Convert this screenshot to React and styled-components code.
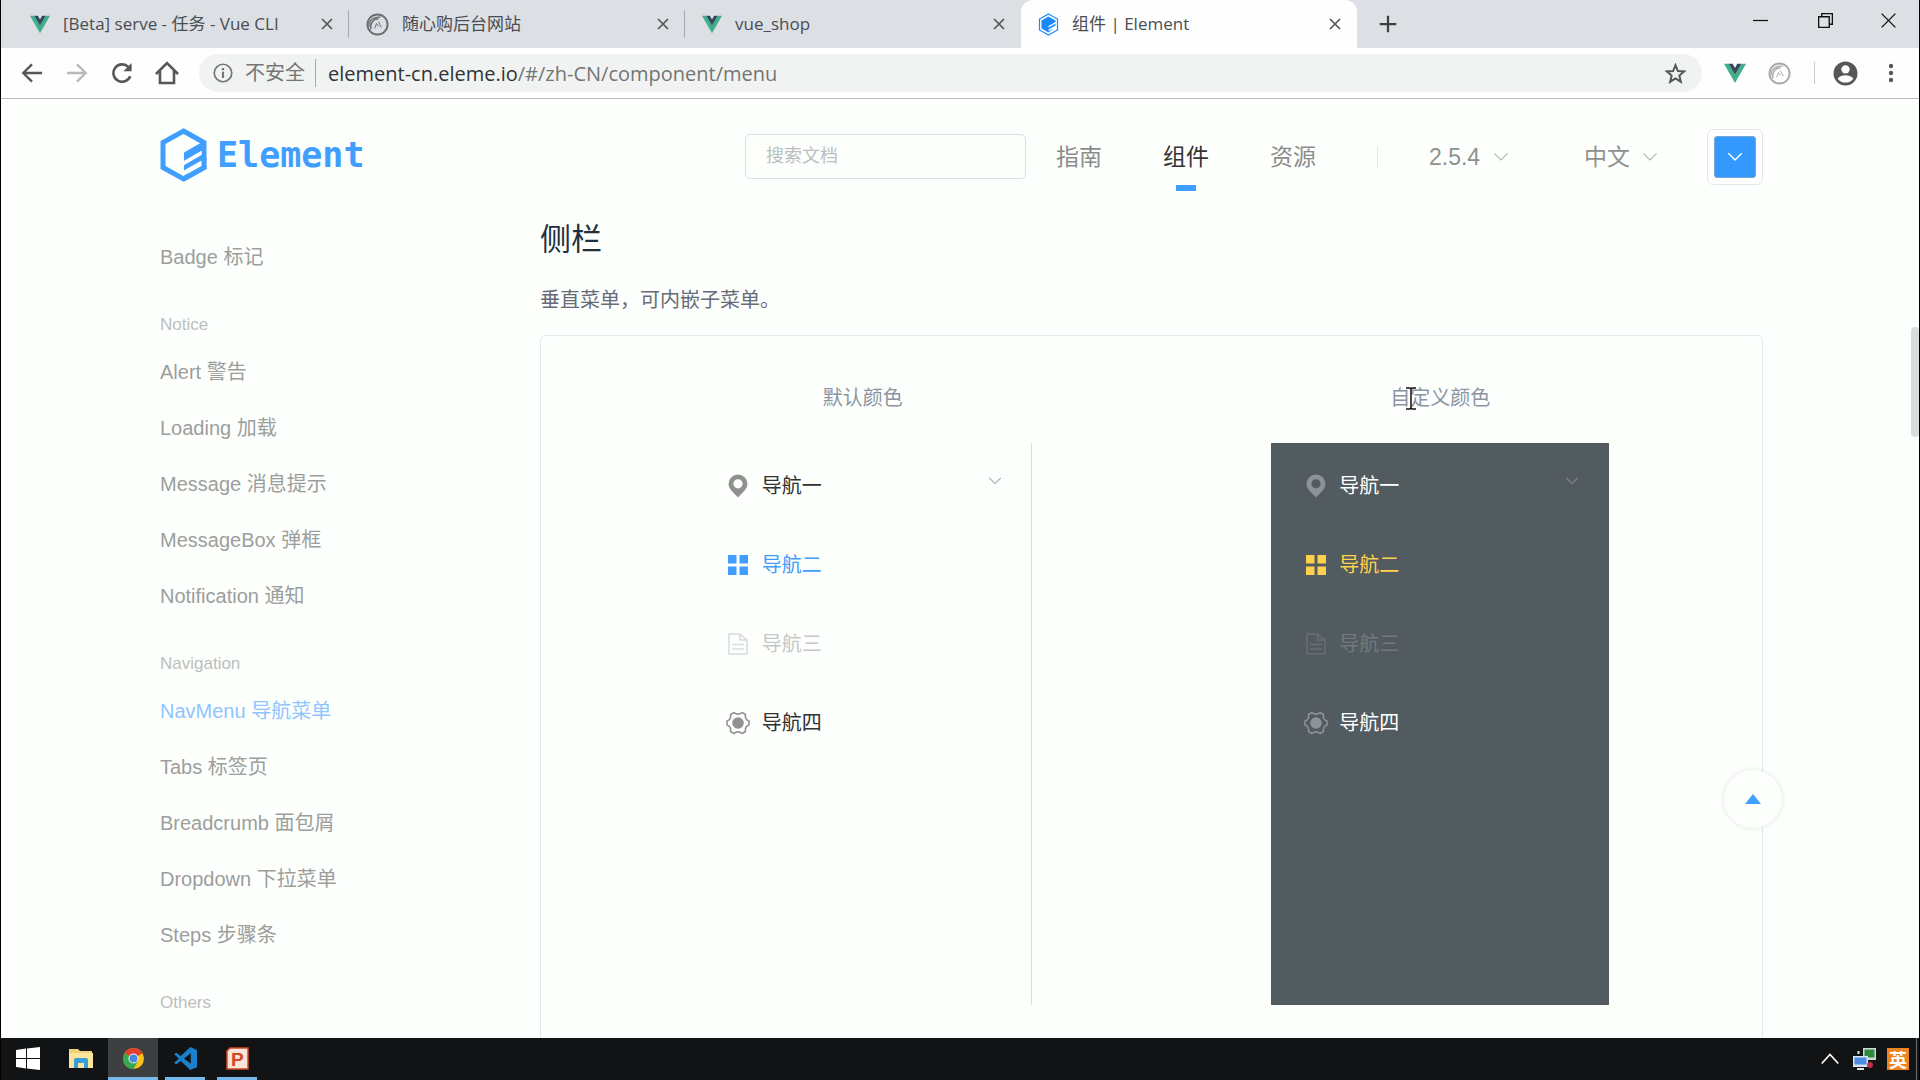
import React from "react";
import styled, { createGlobalStyle, css } from "styled-components";

const ui = `"Open Sans", "Noto Sans CJK SC", sans-serif`;
const body = `"Liberation Sans", "Noto Sans CJK SC", sans-serif`;
const blue = "#409eff";

const Global = createGlobalStyle`
  *, *::before, *::after { box-sizing: border-box; }
  body { margin: 0; background: #fdfffd; font-family: ${body}; }
  button, input, select { font: inherit; color: inherit; border: 0; padding: 0; background: none; }
  a { color: inherit; text-decoration: none; }
  ul, h3, p { margin: 0; padding: 0; list-style: none; font-weight: 400; }
  svg { display: block; flex: none; }
`;

const Screen = styled.div`
  height: 100vh;
  display: flex;
  flex-direction: column;
  border: solid #000;
  border-width: 0 1px;
  overflow: hidden;
`;

/* ---------- browser chrome ---------- */

const TabStrip = styled.header`
  flex: none;
  height: 48px;
  display: flex;
  align-items: stretch;
  padding-left: 12px;
  background: #dcdfe4;
  color: #4a4d52;
  font-family: ${ui};
  font-size: 17px;
`;

const Tab = styled.div`
  position: relative;
  width: 336px;
  display: flex;
  align-items: center;
  padding: 0 14px 0 17px;
  ${(p) =>
    p.$active
      ? css`
          background: #fdfefd;
          border-radius: 12px 12px 0 0;
        `
      : css`
          &::after {
            content: "";
            position: absolute;
            right: 0;
            top: 10px;
            height: 28px;
            width: 1px;
            background: ${p.$divider ? "#a3a6ab" : "transparent"};
          }
        `}
`;

const TabTitle = styled.button`
  flex: 1;
  display: flex;
  align-items: center;
  gap: 13px;
  height: 34px;
  line-height: 34px;
  text-align: left;
  white-space: nowrap;
`;

const IconButton = styled.button`
  display: grid;
  place-items: center;
  width: ${(p) => p.$w || 45}px;
  height: ${(p) => p.$h || 36}px;
  flex: none;
  color: ${(p) => p.$color || "#55585a"};
`;

const NewTab = styled(IconButton)`
  width: 62px;
  height: 48px;
  color: #3c4043;
`;

const WindowControls = styled.div`
  margin-left: auto;
  display: flex;
  padding-bottom: 8px;
`;

const Toolbar = styled.div`
  flex: none;
  height: 51px;
  display: flex;
  align-items: center;
  padding: 0 6px 0 8px;
  background: #fdfefd;
  border-bottom: 1px solid #b9bbba;
  font-family: ${ui};
  font-size: 20px;
`;

const Omnibox = styled.div`
  flex: 1;
  display: flex;
  align-items: center;
  height: 38px;
  margin: 0 12px 0 10px;
  padding: 0 6px 0 14px;
  border-radius: 19px;
  background: #f1f3f2;
  color: #747674;
`;

const Security = styled.span`
  margin-left: 12px;
  padding-right: 10px;
  line-height: 28px;
  border-right: 1px solid #a8aaa8;
`;

const Host = styled.label`
  margin-left: 12px;
  color: #303336;
`;

const Path = styled.input`
  flex: 1;
  min-width: 0;
  outline: 0;
`;

const Separator = styled.span`
  width: 1px;
  height: ${(p) => p.$h}px;
  margin: ${(p) => p.$m};
  background: ${(p) => p.$color};
`;

/* ---------- page ---------- */

const Viewport = styled.div`
  position: relative;
  flex: 1;
  min-height: 0;
  overflow: hidden;
  padding: 0 156px 0 159px;
  background: #fdfffd;
`;

const SiteHeader = styled.header`
  height: 112px;
  display: flex;
  align-items: center;
  justify-content: space-between;
`;

const Logo = styled.a`
  display: flex;
  align-items: center;
  gap: 10px;
  color: ${blue};
  font: 700 35px/54px "DejaVu Sans Mono", monospace;
`;

const SiteNav = styled.nav`
  display: flex;
  align-items: center;
  padding-top: 3px;
  font-size: 23px;
  color: #8a8c8a;
`;

const Search = styled.input`
  width: 281px;
  height: 45px;
  margin-right: 30px;
  padding: 0 20px;
  border: 1px solid #dcdfe0;
  border-radius: 5px;
  font-size: 18px;
  &::placeholder { color: #bbbdbf; opacity: 1; }
`;

const NavLink = styled.a`
  position: relative;
  margin-right: 61px;
  line-height: 108px;
  color: ${(p) => (p.$active ? "#333533" : "inherit")};
  &::after {
    content: "";
    display: ${(p) => (p.$active ? "block" : "none")};
    position: absolute;
    left: calc(50% - 10px);
    bottom: 20px;
    width: 20px;
    height: 6px;
    background: ${blue};
  }
`;

const Dropdown = styled.label`
  display: flex;
  align-items: center;
  gap: 12px;
  margin-right: ${(p) => p.$after}px;
  color: #b4b6b4;
`;

const Select = styled.select`
  appearance: none;
  color: #8f918f;
  line-height: 32px;
  outline: 0;
`;

const ColorPicker = styled.button`
  width: 56px;
  height: 56px;
  padding: 6px;
  border: 1px solid #e4e6e6;
  border-radius: 6px;
  background: #fff;
`;

const Swatch = styled.span`
  display: grid;
  place-items: center;
  height: 42px;
  border: 1px solid #7aa6d6;
  border-radius: 3px;
  background: #3399ff;
  color: #fff;
`;

const Columns = styled.div`
  display: grid;
  grid-template-columns: 380px minmax(0, 1fr);
`;

const Sidebar = styled.nav`
  padding-top: 18px;
  font-size: 20px;
  color: #9c9e9c;
`;

const SideLink = styled.a`
  display: block;
  line-height: 56px;
  color: ${(p) => (p.$active ? "#8fc5ff" : "inherit")};
`;

const SideTitle = styled.div`
  margin-top: 20px;
  line-height: 39px;
  font-size: 17px;
  color: #bcbebc;
`;

const Article = styled.main`
  padding-top: 8px;
`;

const Heading = styled.h3`
  font-size: 31px;
  line-height: 42px;
  color: #1f2f3d;
`;

const Intro = styled.p`
  margin: 24px 0 20px;
  font-size: 20px;
  line-height: 30px;
  color: #666b76;
`;

const Demo = styled.section`
  display: grid;
  grid-template-columns: 1fr 1fr;
  padding: 42px 33px 60px;
  border: 1px solid #e6e8e8;
  border-radius: 5px;
`;

const DemoColumn = styled.div`
  display: flex;
  flex-direction: column;
  align-items: center;
  gap: 25px;
`;

const Caption = styled.span`
  position: relative;
  font-size: 20px;
  line-height: 40px;
  color: #8b94a2;
`;

const TextCursor = styled.svg`
  position: absolute;
  left: 16px;
  top: 9px;
`;

const Menu = styled.ul`
  width: 338px;
  height: 562px;
  padding-top: 3px;
  background: ${(p) => (p.$dark ? "#525b60" : "transparent")};
  border-right: 1px solid ${(p) => (p.$dark ? "#525b60" : "#dcdddc")};
`;

const itemColor = ({ $dark, $active, $disabled }) => {
  if ($active) return $dark ? "#ffd04b" : blue;
  if ($disabled) return $dark ? "#71797e" : "#c6c8c7";
  return $dark ? "#fff" : "#303133";
};
const iconColor = ({ $dark, $active, $disabled }) => {
  if ($active) return $dark ? "#ffd04b" : blue;
  if ($disabled) return $dark ? "#687075" : "#d9dbda";
  return $dark ? "#8d9397" : "#909290";
};

const MenuItem = styled.button`
  display: flex;
  align-items: center;
  width: 100%;
  height: 79px;
  padding: 0 29px 0 28px;
  font-size: 20px;
  line-height: 30px;
  color: ${itemColor};
`;

const MenuIcon = styled.span`
  display: grid;
  place-items: center;
  width: 33px;
  margin-right: 7px;
  color: ${iconColor};
`;

const MenuArrow = styled.span`
  margin-left: auto;
  padding-bottom: 10px;
  color: ${(p) => (p.$dark ? "#868d92" : "#a8aaa9")};
`;

const BackTop = styled.button`
  position: absolute;
  right: 137px;
  bottom: 210px;
  width: 58px;
  height: 58px;
  display: grid;
  place-items: center;
  border-radius: 50%;
  background: #fdfffd;
  box-shadow: 0 0 5px rgba(0, 0, 0, 0.12);
  color: ${blue};
`;

const ScrollThumb = styled.div`
  position: absolute;
  right: 0;
  top: 228px;
  width: 8px;
  height: 110px;
  border-radius: 4px;
  background: #dadcdc;
`;

/* ---------- taskbar ---------- */

const Taskbar = styled.footer`
  flex: none;
  height: 42px;
  display: flex;
  align-items: stretch;
  background: #111315;
  color: #fff;
`;

const Task = styled.button`
  display: grid;
  place-items: center;
  width: 53px;
  padding-top: 2px;
  border-bottom: 3px solid transparent;
  ${(p) =>
    p.$running &&
    css`
      width: 40px;
      margin: 0 6px;
      border-bottom-color: #76b9ed;
    `}
  ${(p) =>
    p.$focused &&
    css`
      width: 50px;
      margin: 0 1px;
      background: #3d3f41;
      border-bottom-color: #76b9ed;
    `}
`;

const Tray = styled.div`
  margin-left: auto;
  display: flex;
  padding-right: 2px;
`;

const TrayIcon = styled.button`
  display: grid;
  place-items: center;
  width: 34px;
`;

const ImeBadge = styled.span`
  display: grid;
  place-items: center;
  width: 22px;
  height: 22px;
  background: #ee8420;
  font: 700 18px/22px "Noto Sans CJK SC", sans-serif;
`;

/* ---------- icons ---------- */

const Stroke = ({ size = 24, w = 2, children, ...rest }) => (
  <svg width={size} height={size} viewBox="0 0 24 24" fill="none" stroke="currentColor" strokeWidth={w} {...rest}>
    {children}
  </svg>
);

const Vue = ({ size = 20 }) => (
  <svg width={size} height={size} viewBox="0 0 24 24">
    <path d="M0 2h5l7 12 7-12h5L12 23z" fill="#3fb08a" />
    <path d="M5 2h4.500l2.500 4.500L14.500 2H19l-7 12z" fill="#34495e" />
  </svg>
);

const Sphere = ({ size = 23, color = "#6b6e72" }) => (
  <Stroke size={size} w={2} style={{ color }}>
    <circle cx="12" cy="12" r="10.500" />
    <path d="M3 14C3 7 9 3.500 15 4.500M5 17C4 10 8 6 13 6" strokeWidth="1.500" />
    <path d="M9 16l2-5 2 3M13 9l3 6" strokeWidth="1" />
  </Stroke>
);

const ElementFavicon = () => (
  <svg width="21" height="23" viewBox="0 0 21 23">
    <path d="M10.500 1l9 5v11l-9 5-9-5V6z" fill="#fff" stroke="#1989fa" strokeWidth="1.200" />
    <path d="M10.500 3.500l7 4v1.500l-7 4v1.500l7-4v2l-7 4v1.500l5-2.500-5 4-7-4v-8z" fill="#1989fa" />
  </svg>
);

const Cross = () => (
  <Stroke size={12} w={3.500}>
    <path d="M2 2l20 20M22 2L2 22" />
  </Stroke>
);

const Chevron = ({ size = 16, w = 1.800 }) => (
  <Stroke size={size} w={w}>
    <path d="M2 6.500l10 10 10-10" />
  </Stroke>
);

const LogoMark = () => (
  <svg width="47" height="54" viewBox="0 0 47 54">
    <path d="M23.500 3L44 14.500v25L23.500 51 3 39.500v-25z" fill="none" stroke={blue} strokeWidth="5" />
    <path d="M24 24.500L44 13v8.500L24 33z" fill={blue} />
    <path d="M24 37l20-12v6L24 42.500z" fill={blue} />
    <path d="M24 33l17.500-10v4L24 37zM29 41l12.500-7.500H47v3.500L29 46z" fill="#fdfffd" />
    <path d="M44 30v9.500L23.500 51" fill="none" stroke={blue} strokeWidth="5" />
  </svg>
);

const icons = {
  location: (
    <svg width="20" height="24" viewBox="0 0 20 24">
      <path fillRule="evenodd" fill="currentColor" d="M10 0.500A9.500 9.500 0 0 0 .5 10C.5 15 6 19 10 23.500 14 19 19.500 15 19.500 10A9.500 9.500 0 0 0 10 .5zm0 4.700a4.600 4.600 0 1 1 0 9.200 4.600 4.600 0 0 1 0-9.200z" />
    </svg>
  ),
  grid: (
    <svg width="20" height="20" viewBox="0 0 20 20" fill="currentColor">
      <path d="M0 0h8.500v8.500H0zM11.500 0H20v8.500h-8.500zM0 11.500h8.500V20H0zM11.500 11.500H20V20h-8.500z" />
    </svg>
  ),
  document: (
    <svg width="20" height="22" viewBox="0 0 20 22" fill="none" stroke="currentColor" strokeWidth="1.500">
      <path d="M1 1h11l7 6v14H1zM12 1v6h7M4 11.500h12M4 16h12" />
    </svg>
  ),
  setting: (
    <svg width="24" height="24" viewBox="0 0 24 24">
      <path fill="none" stroke="currentColor" strokeWidth="1.600" strokeLinejoin="round" d="M8 1.500c2 2.200 6 2.200 8 0l3.500 2c-.8 3 .8 5.800 3.500 6.500v4c-2.700.7-4.300 3.500-3.500 6.500l-3.500 2c-2-2.200-6-2.200-8 0l-3.500-2c.8-3-.8-5.800-3.500-6.500v-4c2.700-.7 4.300-3.500 3.500-6.500z" />
      <circle cx="12" cy="12" r="5.800" fill="currentColor" />
    </svg>
  ),
};

/* ---------- data ---------- */

const tabs = [
  { title: "[Beta] serve - 任务 - Vue CLI", icon: <Vue />, divider: true },
  { title: "随心购后台网站", icon: <Sphere />, divider: true },
  { title: "vue_shop", icon: <Vue /> },
  { title: "组件 | Element", icon: <ElementFavicon />, active: true },
];

const groups = [
  { links: ["Badge 标记"] },
  { title: "Notice", links: ["Alert 警告", "Loading 加载", "Message 消息提示", "MessageBox 弹框", "Notification 通知"] },
  { title: "Navigation", links: ["NavMenu 导航菜单", "Tabs 标签页", "Breadcrumb 面包屑", "Dropdown 下拉菜单", "Steps 步骤条"] },
  { title: "Others", links: [] },
];

const menuItems = [
  { label: "导航一", icon: "location", arrow: true },
  { label: "导航二", icon: "grid", active: true },
  { label: "导航三", icon: "document", disabled: true },
  { label: "导航四", icon: "setting" },
];

const SideMenu = ({ dark }) => (
  <Menu $dark={dark}>
    {menuItems.map((m) => {
      const look = { $dark: dark, $active: m.active, $disabled: m.disabled };
      return (
        <li key={m.label}>
          <MenuItem type="button" disabled={m.disabled} {...look}>
            <MenuIcon {...look}>{icons[m.icon]}</MenuIcon>
            {m.label}
            {m.arrow && (
              <MenuArrow $dark={dark}>
                <Chevron size={14} />
              </MenuArrow>
            )}
          </MenuItem>
        </li>
      );
    })}
  </Menu>
);

const Browser = () => (
  <>
    <TabStrip>
      {tabs.map((t) => (
        <Tab key={t.title} $active={t.active} $divider={t.divider}>
          <TabTitle type="button">
            {t.icon}
            {t.title}
          </TabTitle>
          <IconButton type="button" aria-label="关闭标签页" $w={16}>
            <Cross />
          </IconButton>
        </Tab>
      ))}
      <NewTab type="button" aria-label="新标签页">
        <Stroke size={18} w={3}>
          <path d="M12 1v22M1 12h22" />
        </Stroke>
      </NewTab>
      <WindowControls>
        <IconButton type="button" aria-label="最小化" $w={65} $h={40} $color="#111">
          <Stroke size={15} w={2}><path d="M0 12h24" /></Stroke>
        </IconButton>
        <IconButton type="button" aria-label="还原" $w={65} $h={40} $color="#111">
          <Stroke size={15} w={2.200}><path d="M1 6h17v17H1zM6 6V1h17v17h-5" /></Stroke>
        </IconButton>
        <IconButton type="button" aria-label="关闭" $w={61} $h={40} $color="#111">
          <Stroke size={15} w={2.200}><path d="M1 1l22 22M23 1L1 23" /></Stroke>
        </IconButton>
      </WindowControls>
    </TabStrip>
    <Toolbar>
      <IconButton type="button" aria-label="后退">
        <Stroke size={22} w={2.600}><path d="M23 12H3M12 2.500L2.500 12l9.500 9.500" /></Stroke>
      </IconButton>
      <IconButton type="button" aria-label="前进" $color="#b9bbba">
        <Stroke size={22} w={2.600}><path d="M1 12h20M12 2.500l9.500 9.500-9.500 9.500" /></Stroke>
      </IconButton>
      <IconButton type="button" aria-label="刷新">
        <Stroke size={22} w={2.800}>
          <path d="M21 15.500A9.500 9.500 0 1 1 19 5.500" />
          <path d="M22.500 1v9h-9z" fill="currentColor" stroke="none" />
        </Stroke>
      </IconButton>
      <IconButton type="button" aria-label="主页">
        <Stroke size={24} w={2.600}><path d="M1 13L12 2l11 11M5 10v12h14V10" /></Stroke>
      </IconButton>
      <Omnibox>
        <Stroke size={20} w={2}>
          <circle cx="12" cy="12" r="10.500" />
          <path d="M12 10.500V18M12 6v2.600" strokeWidth="2.600" />
        </Stroke>
        <Security>不安全</Security>
        <Host htmlFor="address">element-cn.eleme.io</Host>
        <Path id="address" type="text" defaultValue="/#/zh-CN/component/menu" />
        <IconButton type="button" aria-label="收藏" $w={42}>
          <Stroke size={21} w={2.300}>
            <path d="M12 2.500l2.700 6.700 7.200.5-5.500 4.700 1.700 7-6.100-3.800-6.100 3.800 1.700-7L2.100 9.700l7.200-.5z" />
          </Stroke>
        </IconButton>
      </Omnibox>
      <IconButton type="button" aria-label="Vue.js devtools" $w={42}><Vue size={22} /></IconButton>
      <IconButton type="button" aria-label="扩展程序" $w={46}><Sphere color="#a9abaa" /></IconButton>
      <Separator $h={22} $m="0 8px 0 12px" $color="#c8cac9" />
      <IconButton type="button" aria-label="用户">
        <svg width="25" height="25" viewBox="0 0 24 24">
          <circle cx="12" cy="12" r="11.500" fill="#555856" />
          <circle cx="12" cy="8" r="4" fill="#fdfefd" />
          <path d="M4.500 17c2-4.500 13-4.500 15 0-3.500 5-11.500 5-15 0z" fill="#fdfefd" />
        </svg>
      </IconButton>
      <IconButton type="button" aria-label="菜单">
        <svg width="6" height="20" viewBox="0 0 6 20" fill="currentColor">
          <circle cx="3" cy="3" r="2.200" /><circle cx="3" cy="10" r="2.200" /><circle cx="3" cy="17" r="2.200" />
        </svg>
      </IconButton>
    </Toolbar>
  </>
);

const Page = () => (
  <Viewport>
    <SiteHeader>
      <Logo href="#home">
        <LogoMark />
        Element
      </Logo>
      <SiteNav>
        <Search type="search" placeholder="搜索文档" aria-label="搜索文档" />
        <NavLink href="#guide">指南</NavLink>
        <NavLink href="#component" $active>组件</NavLink>
        <NavLink href="#resource">资源</NavLink>
        <Separator $h={22} $m="0 51px 0 0" $color="#e6e8e7" />
        <Dropdown $after={75}>
          <Select aria-label="版本"><option>2.5.4</option></Select>
          <Chevron />
        </Dropdown>
        <Dropdown $after={49}>
          <Select aria-label="语言"><option>中文</option></Select>
          <Chevron />
        </Dropdown>
        <ColorPicker type="button" aria-label="主题颜色">
          <Swatch><Chevron w={2.200} /></Swatch>
        </ColorPicker>
      </SiteNav>
    </SiteHeader>
    <Columns>
      <Sidebar>
        {groups.map((g, i) => (
          <div key={i}>
            {g.title && <SideTitle>{g.title}</SideTitle>}
            {g.links.map((l) => (
              <SideLink key={l} href="#component" $active={l.startsWith("NavMenu")}>{l}</SideLink>
            ))}
          </div>
        ))}
      </Sidebar>
      <Article>
        <Heading>侧栏</Heading>
        <Intro>垂直菜单，可内嵌子菜单。</Intro>
        <Demo>
          <DemoColumn>
            <Caption>默认颜色</Caption>
            <SideMenu />
          </DemoColumn>
          <DemoColumn>
            <Caption>
              自定义颜色
              <TextCursor width="10" height="23" viewBox="0 0 10 23" fill="none" stroke="#111" strokeWidth="1.500">
                <path d="M0 1h4l1 1 1-1h4M0 22h4l1-1 1 1h4M5 2v19" />
              </TextCursor>
            </Caption>
            <SideMenu dark />
          </DemoColumn>
        </Demo>
      </Article>
    </Columns>
    <BackTop type="button" aria-label="回到顶部">
      <svg width="16" height="10" viewBox="0 0 16 10"><path d="M8 0l8 10H0z" fill="currentColor" /></svg>
    </BackTop>
    <ScrollThumb />
  </Viewport>
);

const WindowsTaskbar = () => (
  <Taskbar>
    <Task type="button" aria-label="开始">
      <svg width="24" height="23" viewBox="0 0 24 23" fill="#fff">
        <path d="M0 3l10-1.500V11H0zM11 1.400L24 0v11H11zM0 12h10v9.500L0 20zM11 12h13v11l-13-1.400z" />
      </svg>
    </Task>
    <Task type="button" aria-label="文件资源管理器">
      <svg width="24" height="21" viewBox="0 0 24 21">
        <path d="M0 1h9l2 2h12v17H0z" fill="#f3d277" />
        <path d="M0 5h24v15H0z" fill="#fbe49b" />
        <path d="M5 20v-8q0-2 2-2h10q2 0 2 2v8h-4v-5H9v5z" fill="#35a0da" />
      </svg>
    </Task>
    <Task type="button" aria-label="Chrome" $focused>
      <svg width="21" height="21" viewBox="0 0 24 24">
        <circle cx="12" cy="12" r="12" fill="#fbc116" />
        <path d="M12 12L1.600 6A12 12 0 0 1 22.400 6z" fill="#e0402f" />
        <path d="M12 12L1.600 6A12 12 0 0 0 12 24l5-9z" fill="#35a853" />
        <circle cx="12" cy="12" r="5.800" fill="#f1f3f4" />
        <circle cx="12" cy="12" r="4.600" fill="#4a86e0" />
      </svg>
    </Task>
    <Task type="button" aria-label="Visual Studio Code" $running>
      <svg width="23" height="23" viewBox="0 0 24 24">
        <path d="M17 0l7 3v18l-7 3L7 14.500 2.500 18 0 16.700 5 12 0 7.300 2.500 6 7 9.500zM17.500 6.500L10.500 12l7 5.500z" fill="#1c7fcb" fillRule="evenodd" />
      </svg>
    </Task>
    <Task type="button" aria-label="PowerPoint" $running>
      <svg width="23" height="23" viewBox="0 0 23 23">
        <path d="M4 1h18v21H1V4z" fill="#fbe3d8" stroke="#cf4a24" strokeWidth="1.500" />
        <text x="5" y="18.500" fontFamily="Liberation Sans, sans-serif" fontWeight="700" fontSize="19" fill="#cf4a24">P</text>
      </svg>
    </Task>
    <Tray>
      <TrayIcon type="button" aria-label="显示隐藏的图标">
        <Stroke size={18} w={2.200}><path d="M1 18L12 6l11 12" /></Stroke>
      </TrayIcon>
      <TrayIcon type="button" aria-label="网络">
        <svg width="23" height="22" viewBox="0 0 23 22">
          <path d="M10 0h13v12H10z" fill="#cfd8d3" /><path d="M11.500 1.500h10v8h-10z" fill="#2f8a3c" />
          <path d="M0 8h15v11H0z" fill="#d6e4f4" /><path d="M1.500 9.500h12v7h-12z" fill="#4b8be0" />
          <path d="M4 20h7v2H4zM4.500 3h2v3h-2z" fill="#dfe5e9" />
          <circle cx="17" cy="17" r="3" fill="#b8323e" />
        </svg>
      </TrayIcon>
      <TrayIcon type="button" aria-label="输入法">
        <ImeBadge>英</ImeBadge>
      </TrayIcon>
      <Separator $h={42} $m="0 0 0 1px" $color="#6a6c6e" />
    </Tray>
  </Taskbar>
);

export default function App() {
  return (
    <Screen>
      <Global />
      <Browser />
      <Page />
      <WindowsTaskbar />
    </Screen>
  );
}
